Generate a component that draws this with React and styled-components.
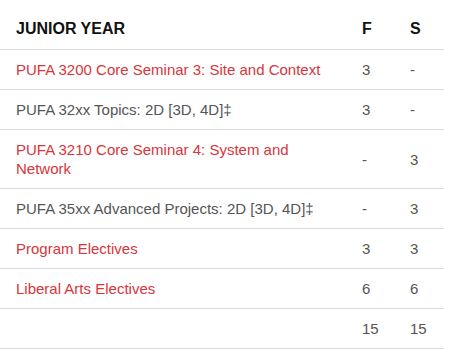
import React from "react";
import styled, { createGlobalStyle } from "styled-components";

const Global = createGlobalStyle`
  html, body { margin: 0; padding: 0; background: #ffffff; }
  body { font-family: "Liberation Sans", Arial, sans-serif; }
`;

const Table = styled.table`
  width: 444px;
  table-layout: fixed;
  border-collapse: collapse;
  font-family: "Liberation Sans", Arial, sans-serif;
`;

const HeadCell = styled.th`
  text-align: left;
  font-weight: bold;
  font-size: 16px;
  color: #111;
  padding: 19px 10px 11px ${(p) => (p.$first ? "16px" : "10px")};
  line-height: 19px;
  border-bottom: 1px solid #dedede;
  width: ${(p) => p.$w};
  box-sizing: border-box;
`;

const Cell = styled.td`
  text-align: left;
  font-size: 15px;
  line-height: 19px;
  padding: 10px 10px 10px ${(p) => (p.$first ? "16px" : "10px")};
  color: ${(p) => (p.$link ? "#d9353b" : "#555")};
  border-bottom: 1px solid #dedede;
  vertical-align: middle;
`;

const rows = [
  { name: "PUFA 3200 Core Seminar 3: Site and Context", link: true, f: "3", s: "-" },
  { name: "PUFA 32xx Topics: 2D [3D, 4D]‡", link: false, f: "3", s: "-" },
  { name: "PUFA 3210 Core Seminar 4: System and Network", link: true, f: "-", s: "3" },
  { name: "PUFA 35xx Advanced Projects: 2D [3D, 4D]‡", link: false, f: "-", s: "3" },
  { name: "Program Electives", link: true, f: "3", s: "3" },
  { name: "Liberal Arts Electives", link: true, f: "6", s: "6" },
  { name: "", link: false, f: "15", s: "15" },
];

export default function App() {
  return (
    <>
      <Global />
      <Table>
        <thead>
          <tr>
            <HeadCell $first $w="352px">JUNIOR YEAR</HeadCell>
            <HeadCell $w="48px">F</HeadCell>
            <HeadCell $w="44px">S</HeadCell>
          </tr>
        </thead>
        <tbody>
          {rows.map((r, i) => (
            <tr key={i}>
              <Cell $first $link={r.link}>{r.name}</Cell>
              <Cell>{r.f}</Cell>
              <Cell>{r.s}</Cell>
            </tr>
          ))}
        </tbody>
      </Table>
    </>
  );
}
